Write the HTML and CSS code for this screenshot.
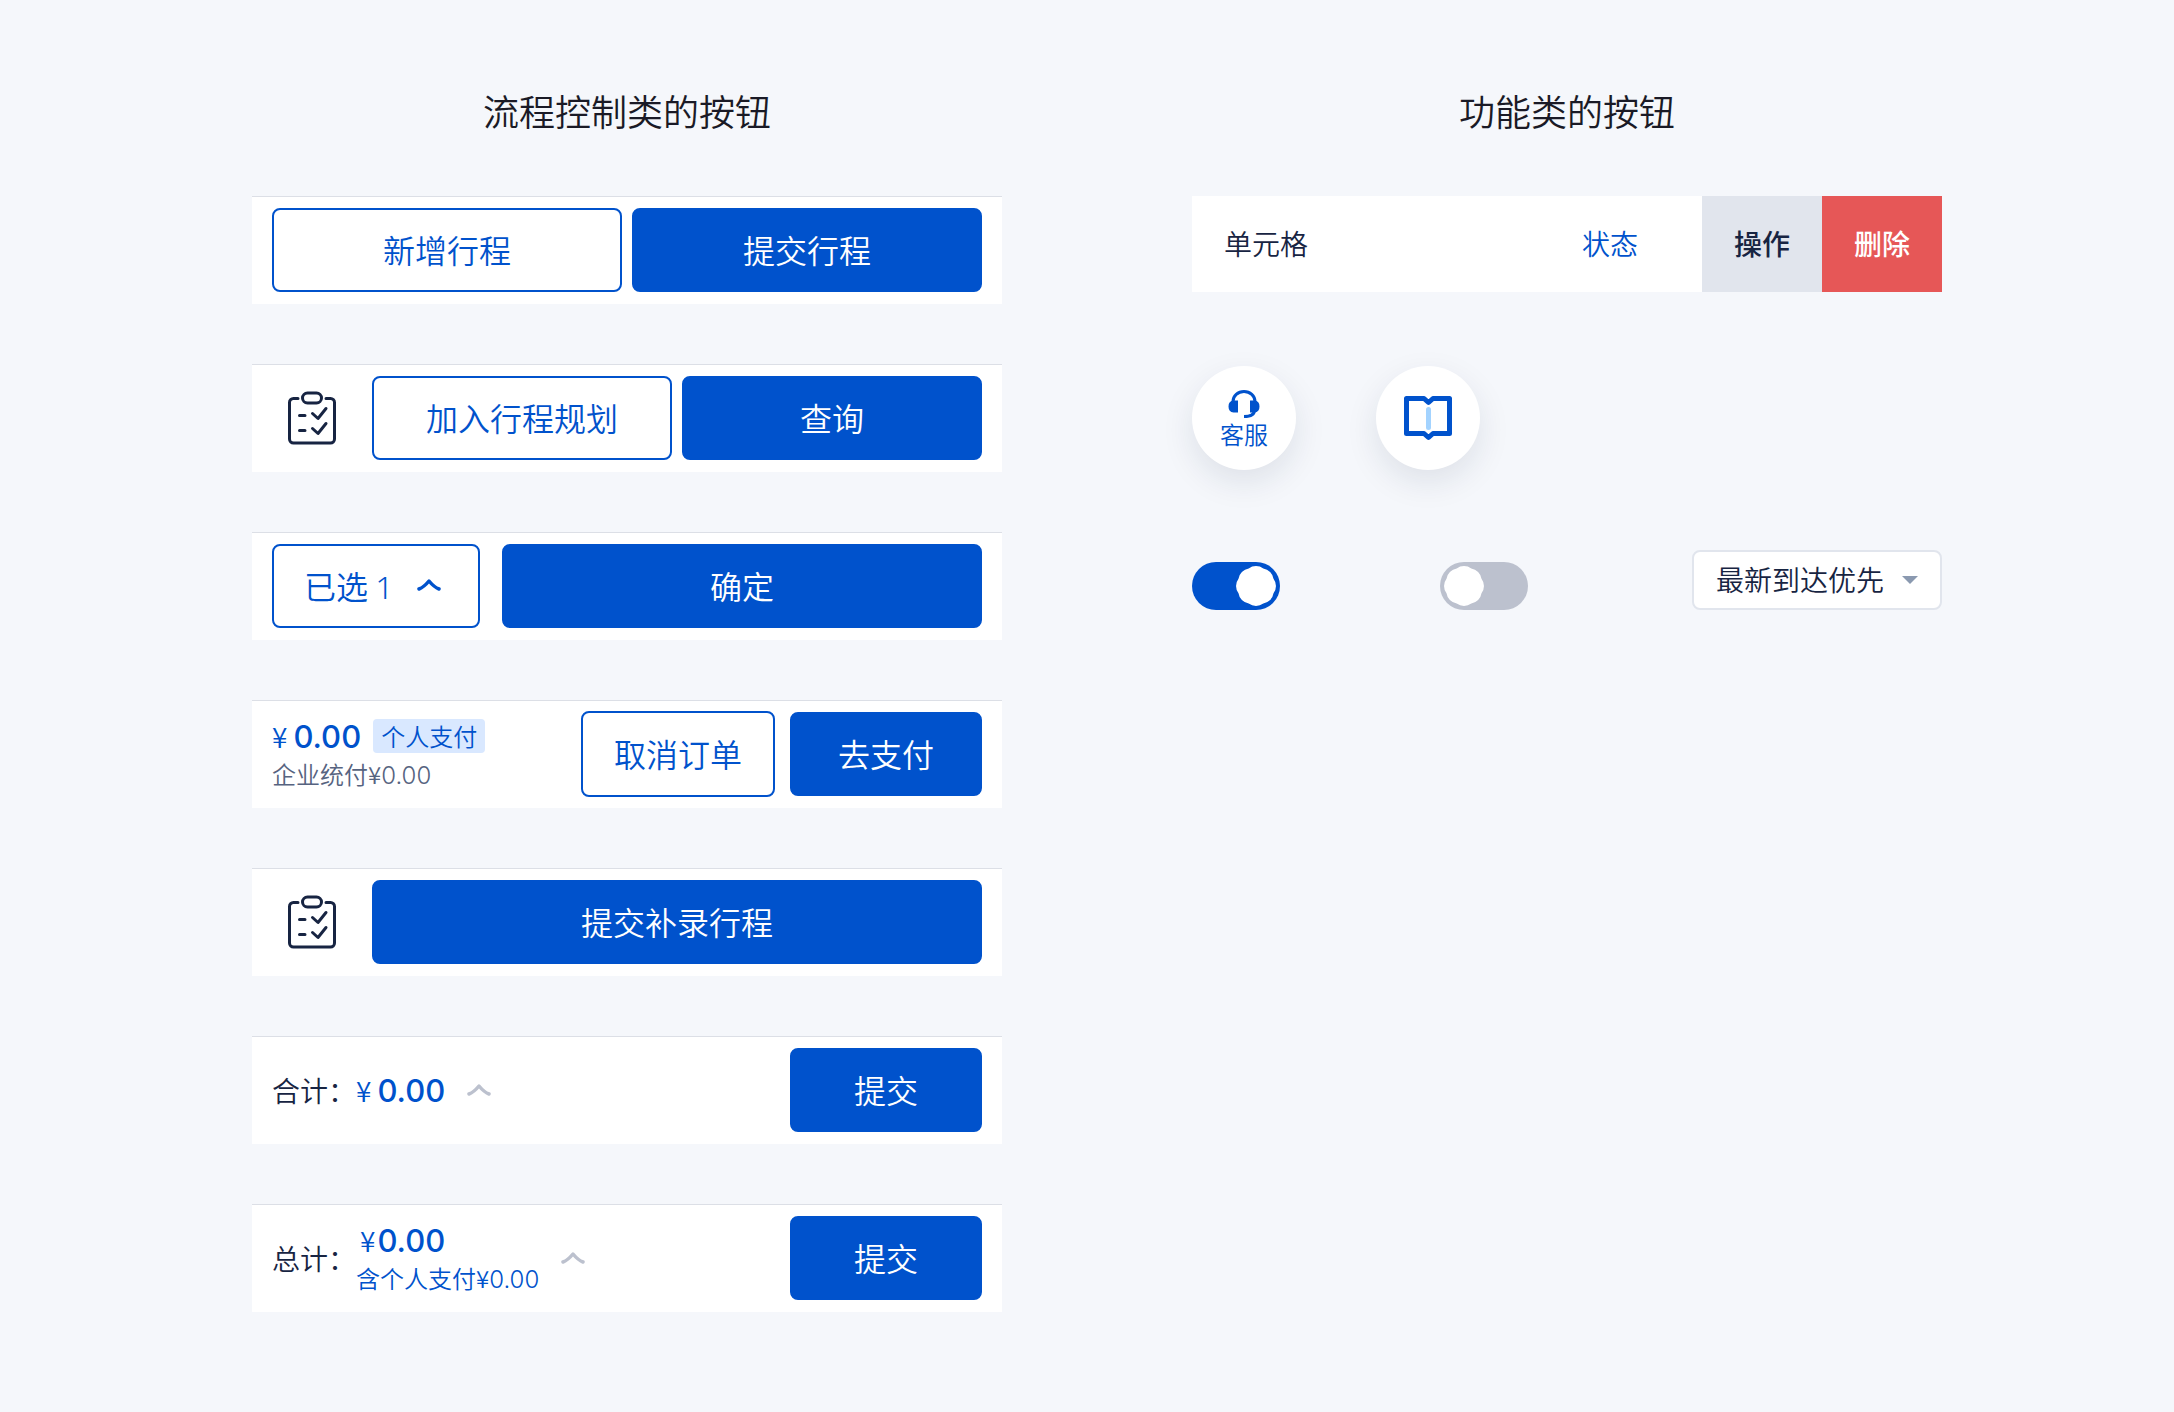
FILE: index.html
```
<!DOCTYPE html>
<html lang="zh-CN">
<head>
  <meta charset="UTF-8">
  <title>按钮</title>
  <meta name="viewport" content="width=device-width, initial-scale=1">
  <link rel="stylesheet" href="styles.css">
</head>
<body>
  <svg class="sprite" aria-hidden="true">
    <symbol id="icon-plan" viewBox="0 0 50 54">
      <g fill="none" stroke="#172442" stroke-width="3" stroke-linecap="round" stroke-linejoin="round">
        <path d="M11 7.500H6.500a4 4 0 0 0-4 4V48a4 4 0 0 0 4 4h37a4 4 0 0 0 4-4V11.500a4 4 0 0 0-4-4H39"/>
        <rect x="15.500" y="2" width="19" height="10" rx="5"/>
        <path d="M12.500 24.500h5.500M12.500 39.500h5.500M25.500 22.500l5.500 5 8-10M25.500 37.500l5.500 5 8-10"/>
      </g>
    </symbol>
    <symbol id="icon-up" viewBox="0 0 24 12">
      <path d="M2 10C6 8.500 9.500 5 12 2c2.500 3 6 6.500 10 8" fill="none" stroke="currentColor" stroke-width="3.500" stroke-linecap="round" stroke-linejoin="round"/>
    </symbol>
  </svg>

  <main class="page">
    <section class="column">
      <h2>流程控制类的按钮</h2>

      <div class="bar">
        <button type="button" class="btn btn-line">新增行程</button>
        <button type="button" class="btn btn-fill">提交行程</button>
      </div>

      <div class="bar">
        <button type="button" class="btn-icon" aria-label="行程规划"><svg><use href="#icon-plan"/></svg></button>
        <button type="button" class="btn btn-line">加入行程规划</button>
        <button type="button" class="btn btn-fill">查询</button>
      </div>

      <div class="bar bar-wide">
        <button type="button" class="btn btn-line btn-picked"><span>已选 <span class="count">1</span></span><svg class="arrow"><use href="#icon-up"/></svg></button>
        <button type="button" class="btn btn-fill">确定</button>
      </div>

      <div class="bar bar-pay">
        <div class="summary">
          <div class="price-row"><span class="price"><i>¥</i><b class="num">0.00</b></span><span class="tag">个人支付</span></div>
          <div class="note">企业统付¥<span class="num">0.00</span></div>
        </div>
        <button type="button" class="btn btn-line btn-cancel">取消订单</button>
        <button type="button" class="btn btn-fill btn-fixed">去支付</button>
      </div>

      <div class="bar">
        <button type="button" class="btn-icon" aria-label="行程规划"><svg><use href="#icon-plan"/></svg></button>
        <button type="button" class="btn btn-fill">提交补录行程</button>
      </div>

      <div class="bar">
        <div class="total">
          <span class="label">合计：</span>
          <span class="price"><i>¥</i><b class="num">0.00</b></span>
          <svg class="arrow"><use href="#icon-up"/></svg>
        </div>
        <button type="button" class="btn btn-fill btn-fixed">提交</button>
      </div>

      <div class="bar">
        <div class="total">
          <span class="label">总计：</span>
          <div class="summary">
            <span class="price price-tight"><i>¥</i><b class="num">0.00</b></span>
            <div class="note note-blue">含个人支付¥<span class="num">0.00</span></div>
          </div>
          <svg class="arrow"><use href="#icon-up"/></svg>
        </div>
        <button type="button" class="btn btn-fill btn-fixed">提交</button>
      </div>
    </section>

    <section class="column">
      <h2>功能类的按钮</h2>

      <div class="cell">
        <span class="cell-name">单元格</span>
        <a href="#" class="cell-status">状态</a>
        <button type="button" class="cell-btn">操作</button>
        <button type="button" class="cell-btn cell-delete">删除</button>
      </div>

      <div class="rounds">
        <button type="button" class="round">
          <svg class="icon-service" viewBox="0 0 32 28">
            <path d="M5 12v-.500a11 10 0 0 1 22 0v.500M26.500 20c0 4.500-4 6.500-10.500 6.500" fill="none" stroke="#0052cc" stroke-width="3"/>
            <path d="M10 10.500H5.500Q.500 11 .500 16.500t5 6H10zM22 10.500h4.500q5 .500 5 6t-5 6H22z" fill="#0052cc"/>
          </svg>
          客服
        </button>
        <button type="button" class="round" aria-label="手册">
          <svg class="icon-book" viewBox="0 0 48 46">
            <path d="M2.500 3.500h17.500l4.500 4 4.500-4h16.500v35H29l-4.500 4-4.500-4H2.500z" fill="none" stroke="#0052cc" stroke-width="5" stroke-linejoin="round"/>
            <path d="M24.500 14.500v18" stroke="#a3d3ff" stroke-width="5" stroke-linecap="round"/>
          </svg>
        </button>
      </div>

      <div class="tools">
        <input type="checkbox" class="switch" aria-label="开关" checked>
        <input type="checkbox" class="switch" aria-label="开关">
        <div class="select">
          <select aria-label="排序">
            <option>最新到达优先</option>
          </select>
        </div>
      </div>
    </section>
  </main>
</body>
</html>
```
FILE: styles.css
```
* {
  box-sizing: border-box;
}
body {
  margin: 0;
  background: #f5f7fb;
  color: #172442;
  font-family: "Noto Sans CJK SC", sans-serif;
  font-size: 28px;
  font-weight: 350;
}
button, select {
  font-family: inherit;
  font-weight: inherit;
  margin: 0;
  cursor: pointer;
}
.num {
  font-family: Inter, "Noto Sans CJK SC", sans-serif;
  line-height: 1;
}
.count {
  font-family: "Noto Sans", "Noto Sans CJK SC", sans-serif;
}
.sprite {
  display: none;
}
.page {
  display: grid;
  grid-template-columns: 1fr 1fr;
  gap: 190px;
  padding: 84px 232px 100px 252px;
}
h2 {
  margin: 0 0 60px;
  text-align: center;
  font-size: 36px;
  font-weight: 350;
  line-height: 52px;
  color: #1a1a26;
}

/* bottom bars */
.bar {
  display: flex;
  align-items: center;
  gap: 10px;
  height: 108px;
  margin-bottom: 60px;
  padding: 11px 20px 12px;
  background: #fff;
  border-top: 1px solid #dcdfe6;
}
.bar-wide {
  gap: 22px;
}
.bar-pay {
  gap: 15px;
}
.btn {
  flex: 1;
  height: 84px;
  padding: 0 0 2px;
  border: 2px solid #0052cc;
  border-radius: 8px;
  font-size: 32px;
}
.btn-line {
  background: #fff;
  color: #0052cc;
}
.btn-fill {
  background: #0052cc;
  color: #fff;
}
.btn-picked {
  display: flex;
  flex: none;
  align-items: center;
  gap: 24px;
  width: 208px;
  padding-left: 30px;
}
.btn-cancel {
  flex: none;
  width: 194px;
  height: 86px;
}
.btn-fixed {
  flex: none;
  width: 192px;
}
.btn-icon {
  width: 90px;
  height: 84px;
  padding: 0 10px 0 0;
  border: 0;
  background: none;
}
.btn-icon svg {
  display: block;
  width: 50px;
  height: 54px;
  margin: 0 auto;
}
.arrow {
  flex: none;
  width: 24px;
  height: 12px;
}

/* prices */
.summary,
.total {
  flex: 1;
}
.total {
  display: flex;
  align-items: center;
  color: #0052cc;
}
.total .summary {
  flex: none;
}
.total .arrow {
  margin-left: 22px;
  color: #bcc1ce;
}
.label {
  color: #172442;
}
.price-row {
  display: flex;
  align-items: center;
  gap: 12px;
}
.price {
  display: inline-flex;
  align-items: baseline;
  gap: 6px;
  color: #0052cc;
  line-height: 40px;
}
.price i {
  font-style: normal;
}
.price b {
  font-size: 31px;
  font-weight: 500;
}
.price-tight {
  gap: 2px;
  padding-left: 4px;
}
.tag {
  padding: 0 8px;
  border-radius: 4px;
  background: #d9e8ff;
  color: #0052cc;
  font-size: 24px;
  line-height: 34px;
}
.note {
  color: #566380;
  font-size: 24px;
  line-height: 36px;
}
.note-blue {
  color: #0052cc;
}

/* swipe cell */
.cell {
  display: flex;
  height: 96px;
  background: #fff;
  line-height: 94px;
}
.cell-name {
  flex: 1;
  padding-left: 32px;
}
.cell-status {
  padding-right: 64px;
  color: #0052cc;
  text-decoration: none;
}
.cell-btn {
  width: 120px;
  padding: 0 0 2px;
  border: 0;
  background: #e1e5ed;
  color: #172442;
  font-size: 28px;
  font-weight: 500;
}
.cell-delete {
  background: #e65757;
  color: #fff;
}

/* floating buttons */
.rounds {
  display: flex;
  gap: 80px;
  margin-top: 74px;
}
.round {
  display: flex;
  flex-direction: column;
  align-items: center;
  justify-content: center;
  width: 104px;
  height: 104px;
  padding: 0;
  border: 0;
  border-radius: 50%;
  background: #fff;
  box-shadow: 0 12px 32px rgba(23, 36, 66, 0.1);
  color: #0052cc;
  font-size: 24px;
  line-height: 32px;
}
.icon-service {
  width: 32px;
  height: 28px;
  margin-top: 4px;
}
.icon-book {
  width: 48px;
  height: 46px;
}

.tools {
  display: flex;
  align-items: flex-end;
  margin-top: 80px;
}
.switch {
  appearance: none;
  width: 88px;
  height: 48px;
  margin: 0 160px 0 0;
  padding: 4px;
  border-radius: 24px;
  background: #bcc1ce;
  cursor: pointer;
}
/* knob with eight soft lobes */
.switch::before {
  content: "";
  display: block;
  width: 40px;
  height: 40px;
  background: #fff;
  clip-path: path("M37.5 12.7A12 12 0 0 1 37.5 27.3A12 12 0 0 1 27.3 37.5A12 12 0 0 1 12.7 37.5A12 12 0 0 1 2.500 27.3A12 12 0 0 1 2.500 12.7A12 12 0 0 1 12.7 2.500A12 12 0 0 1 27.3 2.500A12 12 0 0 1 37.5 12.7Z");
}
.switch:checked {
  background: #0052cc;
}
.switch:checked::before {
  margin-left: auto;
}
.select {
  position: relative;
  width: 250px;
  margin-left: auto;
}
.select select {
  appearance: none;
  display: block;
  width: 100%;
  height: 60px;
  padding: 0 0 2px 22px;
  border: 2px solid #e1e5ed;
  border-radius: 8px;
  background: #fff;
  color: #172442;
  font-size: 28px;
}
.select::after {
  content: "";
  position: absolute;
  top: 26px;
  right: 24px;
  border: 8px solid transparent;
  border-top-color: #8a99b0;
  border-bottom: 0;
  pointer-events: none;
}
```
